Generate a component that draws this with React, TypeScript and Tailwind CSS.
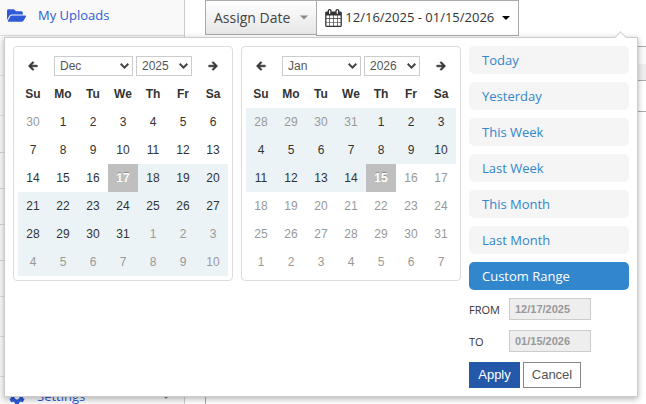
import type { ReactNode } from 'react'
import { FaArrowLeft, FaArrowRight, FaCog, FaFolderOpen } from 'react-icons/fa'

type Month = {
  id: string
  month: string
  year: string
  days: number[]
  // indexes into the 42 day cells
  current: [number, number]
  range: [number, number]
  active: number
}

const buildDays = (prev: number[], length: number) => {
  const days = [...prev]
  for (let i = 1; i <= length; i++) days.push(i)
  for (let i = 1; days.length < 42; i++) days.push(i)
  return days
}

const months: Month[] = [
  { id: 'left', month: 'Dec', year: '2025', days: buildDays([30], 31), current: [1, 31], range: [18, 41], active: 17 },
  { id: 'right', month: 'Jan', year: '2026', days: buildDays([28, 29, 30, 31], 31), current: [4, 17], range: [0, 17], active: 18 },
]

const weekDays = ['Su', 'Mo', 'Tu', 'We', 'Th', 'Fr', 'Sa']
const monthNames = ['Jan', 'Feb', 'Mar', 'Apr', 'May', 'Jun', 'Jul', 'Aug', 'Sep', 'Oct', 'Nov', 'Dec']
const ranges = ['Today', 'Yesterday', 'This Week', 'Last Week', 'This Month', 'Last Month', 'Custom Range']

function CalendarIcon() {
  return (
    <svg viewBox="0 0 1664 1792" className="h-[18px] w-[17px] shrink-0" fill="currentColor" aria-hidden="true">
      <path d="M128 1664h288v-288h-288v288zm352 0h320v-288h-320v288zm-352-352h288v-320h-288v320zm352 0h320v-320h-320v320zm-352-384h288v-288h-288v288zm736 736h320v-288h-320v288zm-384-736h320v-288h-320v288zm768 736h288v-288h-288v288zm-384-352h320v-320h-320v320zm-352-864v-288q0-13-9.5-22.5t-22.5-9.5h-64q-13 0-22.5 9.5t-9.5 22.5v288q0 13 9.5 22.5t22.5 9.5h64q13 0 22.5-9.5t9.5-22.5zm736 864h288v-320h-288v320zm-384-384h320v-288h-320v288zm384 0h288v-288h-288v288zm32-480v-288q0-13-9.5-22.5t-22.5-9.5h-64q-13 0-22.5 9.5t-9.5 22.5v288q0 13 9.5 22.5t22.5 9.5h64q13 0 22.5-9.5t9.5-22.5zm384-64v1280q0 52-38 90t-90 38h-1408q-52 0-90-38t-38-90v-1280q0-52 38-90t90-38h128v-96q0-66 47-113t113-47h64q66 0 113 47t47 113v96h384v-96q0-66 47-113t113-47h64q66 0 113 47t47 113v96h128q52 0 90 38t38 90z" />
    </svg>
  )
}

function Caret({ className }: { className: string }) {
  return (
    <svg viewBox="0 0 8 4" className={className} fill="currentColor" aria-hidden="true">
      <path d="M0 0h8L4 4z" />
    </svg>
  )
}

type SelectProps = { label: string; value: string; className: string; children: ReactNode }

function Select({ label, value, className, children }: SelectProps) {
  return (
    <div className={`relative ${className}`}>
      <select
        aria-label={label}
        defaultValue={value}
        className="block h-5 w-full appearance-none border border-[#ccc] bg-white pl-[5px]"
      >
        {children}
      </select>
      <svg viewBox="0 0 9 6" className="pointer-events-none absolute top-[7px] right-1 h-1.5 w-[9px]" aria-hidden="true">
        <path d="M.7.8l3.8 3.8L8.3.8" fill="none" stroke="#444" strokeWidth="2" />
      </svg>
    </div>
  )
}

function dayClass(m: Month, i: number) {
  if (i === m.active) return 'bg-[#bfbfbf] font-bold text-white [text-shadow:0_-1px_0_rgba(0,0,0,0.25)]'
  const bg = i >= m.range[0] && i <= m.range[1] ? 'bg-[#ebf3f7]' : 'bg-white'
  const color = i >= m.current[0] && i <= m.current[1] ? 'text-[#333]' : 'text-[#999]'
  return `${bg} ${color}`
}

function Calendar({ m }: { m: Month }) {
  return (
    <div className="w-[220px] self-start rounded border border-[#ddd] p-1">
      <table className="w-full table-fixed border-collapse text-center text-xs">
        <thead className="text-[#333]">
          <tr className="h-[29px]">
            <th className="p-0">
              <button type="button" aria-label="Previous month" className="block w-full">
                <FaArrowLeft className="mx-auto size-2.5 overflow-visible stroke-current stroke-[36]" />
              </button>
            </th>
            <th colSpan={5} className="p-0 font-normal">
              <div className="flex justify-center gap-[3px] text-[#555]">
                <Select label={`${m.id} month`} value={m.month} className="w-[79px]">
                  {monthNames.map(name => (
                    <option key={name}>{name}</option>
                  ))}
                </Select>
                <Select label={`${m.id} year`} value={m.year} className="w-14">
                  <option>2025</option>
                  <option>2026</option>
                </Select>
              </div>
            </th>
            <th className="p-0">
              <button type="button" aria-label="Next month" className="block w-full">
                <FaArrowRight className="mx-auto size-2.5 overflow-visible stroke-current stroke-[36]" />
              </button>
            </th>
          </tr>
          <tr className="h-7">
            {weekDays.map(day => (
              <th key={day} className="p-0 font-bold">{day}</th>
            ))}
          </tr>
        </thead>
        <tbody>
          {[0, 1, 2, 3, 4, 5].map(week => (
            <tr key={week} className="h-7">
              {m.days.slice(week * 7, week * 7 + 7).map((day, i) => (
                <td key={i} className={`p-0 ${dayClass(m, week * 7 + i)}`}>{day}</td>
              ))}
            </tr>
          ))}
        </tbody>
      </table>
    </div>
  )
}

function DateField({ id, label, value }: { id: string; label: string; value: string }) {
  return (
    <div className="flex h-[22px] items-center">
      <label htmlFor={id} className="w-10 pt-0.5 font-['Open_Sans',sans-serif] text-[11px] text-[#333]">{label}</label>
      <input
        id={id}
        defaultValue={value}
        disabled
        className="h-[22px] w-[82px] border border-[#ccc] bg-[#eee] px-[5px] text-[11px] font-bold text-[#999]"
      />
    </div>
  )
}

function RangePicker() {
  return (
    <div className="absolute top-[37px] left-1 z-10 flex gap-2 border border-[#ccc] bg-white p-2 shadow-[0_2px_6px_rgba(0,0,0,0.3)]">
      {/* Pointer */}
      <div className="absolute -top-[5px] right-3 size-[9px] rotate-45 border-t border-l border-[#ccc] bg-white" />

      {months.map(m => (
        <Calendar key={m.id} m={m} />
      ))}

      <div className="w-40">
        <ul className="flex flex-col gap-2 font-['Open_Sans',sans-serif] text-[13px]">
          {ranges.map(range => (
            <li key={range}>
              <button
                type="button"
                className={`block h-7 w-full rounded-[5px] px-[13px] pt-0.5 text-left ${
                  range === 'Custom Range' ? 'bg-[#3286cc] text-white' : 'bg-[#f5f5f5] text-[#3286cc]'
                }`}
              >
                {range}
              </button>
            </li>
          ))}
        </ul>
        <div className="mt-2 flex flex-col gap-2.5">
          <DateField id="from" label="FROM" value="12/17/2025" />
          <DateField id="to" label="TO" value="01/15/2026" />
        </div>
        <div className="mt-2.5 flex gap-[3px] text-[13px]">
          <button type="button" className="h-[26px] w-[51px] bg-[#2459a9] text-white">Apply</button>
          <button type="button" className="h-[26px] w-[58px] border border-[#888] bg-white text-[#555]">Cancel</button>
        </div>
      </div>
    </div>
  )
}

export default function App() {
  return (
    <div className="relative flex h-screen overflow-hidden bg-white font-['Liberation_Sans',Arial,sans-serif] text-[#333]">
      {/* Sidebar */}
      <nav className="w-[185px] shrink-0 border-r border-[#ccc] bg-[#f9f9f9] font-['Open_Sans',sans-serif] text-[13px] text-[#2f5bd8]">
        <a href="#uploads" className="flex h-9 items-center gap-3 border-b border-[#ddd] pb-1 pl-[7px]">
          <FaFolderOpen className="size-[19px]" />
          My Uploads
        </a>
        <div className="h-10 border-b border-[#ddd]" />
        <div className="h-10 border-b border-[#ddd]" />
        <div className="h-[37px] border-b border-dotted border-[#ccc]" />
        <div className="h-9 border-b border-dotted border-[#ccc]" />
        <div className="h-9 border-b border-dotted border-[#ccc]" />
        <div className="h-9 border-b border-dotted border-[#ccc]" />
        <div className="h-9 border-b border-[#ddd]" />
        <div className="h-10 border-b border-[#ddd]" />
        <div className="h-10 border-b border-[#ddd]" />
        <a href="#settings" className="flex h-10 items-center border-b border-[#ddd] pr-[14px] pl-[9px]">
          <FaCog className="mr-3 size-4" />
          <span className="grow">Settings</span>
          <Caret className="h-1 w-2 text-[#888]" />
        </a>
      </nav>

      {/* Content */}
      <main className="min-w-0 grow pl-5">
        <div className="flex h-9 items-start font-['Open_Sans',sans-serif]">
          <button
            type="button"
            className="flex h-[35px] items-center gap-2.5 border border-[#aaa] bg-linear-to-b from-white to-[#e6e6e6] px-2 text-sm text-[#444]"
          >
            Assign Date
            <Caret className="h-[5px] w-2 text-[#888]" />
          </button>
          <button
            type="button"
            className="-ml-px flex h-9 items-center gap-[3px] border border-[#aaa] bg-white px-2 text-[13px] text-[#333]"
          >
            <CalendarIcon />
            12/16/2025 - 01/15/2026
            <Caret className="ml-[5px] h-1 w-2 text-black" />
          </button>
        </div>
        <div className="mt-2.5 h-[400px] border-t border-l border-[#aaa]">
          <div className="h-[17px] bg-[#fafafa]" />
          <div className="h-[17px] border-b border-[#aaa] bg-[#eee]" />
          <div className="h-[31px] border-b border-[#aaa]" />
        </div>
      </main>

      <RangePicker />
    </div>
  )
}
